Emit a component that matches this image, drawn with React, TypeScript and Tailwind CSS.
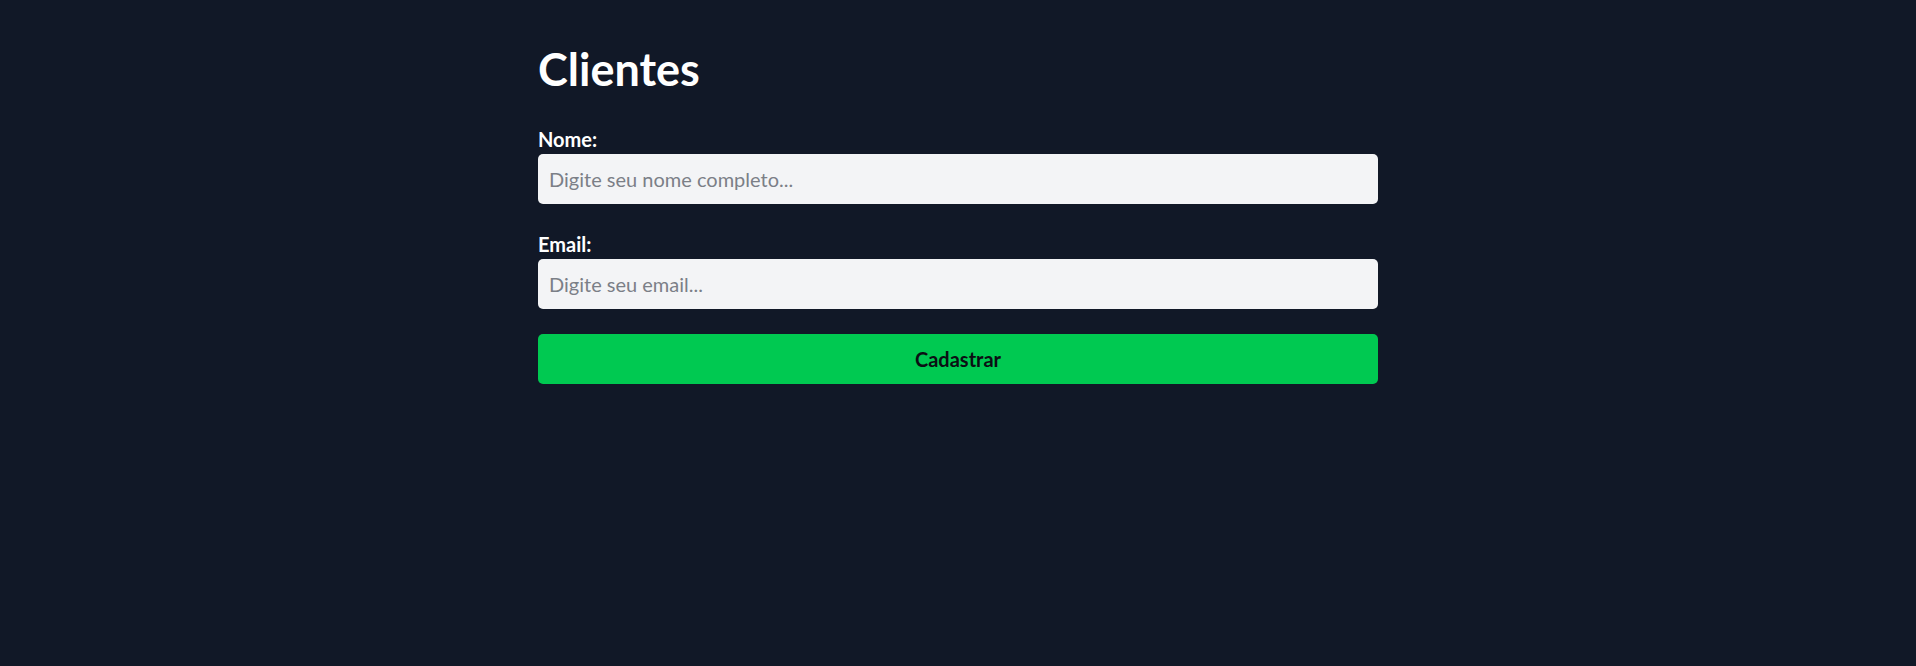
export default function App() {
  return (
    <div className="min-h-[666px] bg-[#111827] font-['Lato',sans-serif] text-white">
      <div className="mx-auto w-[840px] pt-[44px]">
        <h1 className="mb-[30px] text-[45px] leading-[50px] font-bold">Clientes</h1>
        <form className="flex flex-col gap-[25px]" onSubmit={(e) => e.preventDefault()}>
          <div>
            <label className="block text-[20px] leading-[30px] font-bold">Nome:</label>
            <input
              type="text"
              placeholder="Digite seu nome completo..."
              className="block h-[50px] w-full rounded-[5px] bg-[#f3f4f6] px-[11px] text-[20px] text-black outline-none placeholder:text-[#7b7f87]"
            />
          </div>
          <div>
            <label className="block text-[20px] leading-[30px] font-bold">Email:</label>
            <input
              type="email"
              placeholder="Digite seu email..."
              className="block h-[50px] w-full rounded-[5px] bg-[#f3f4f6] px-[11px] text-[20px] text-black outline-none placeholder:text-[#7b7f87]"
            />
          </div>
          <button
            type="submit"
            className="h-[50px] w-full rounded-[5px] bg-[#00c951] text-[20px] font-bold text-[#0b0f14]"
          >
            Cadastrar
          </button>
        </form>
      </div>
    </div>
  )
}
